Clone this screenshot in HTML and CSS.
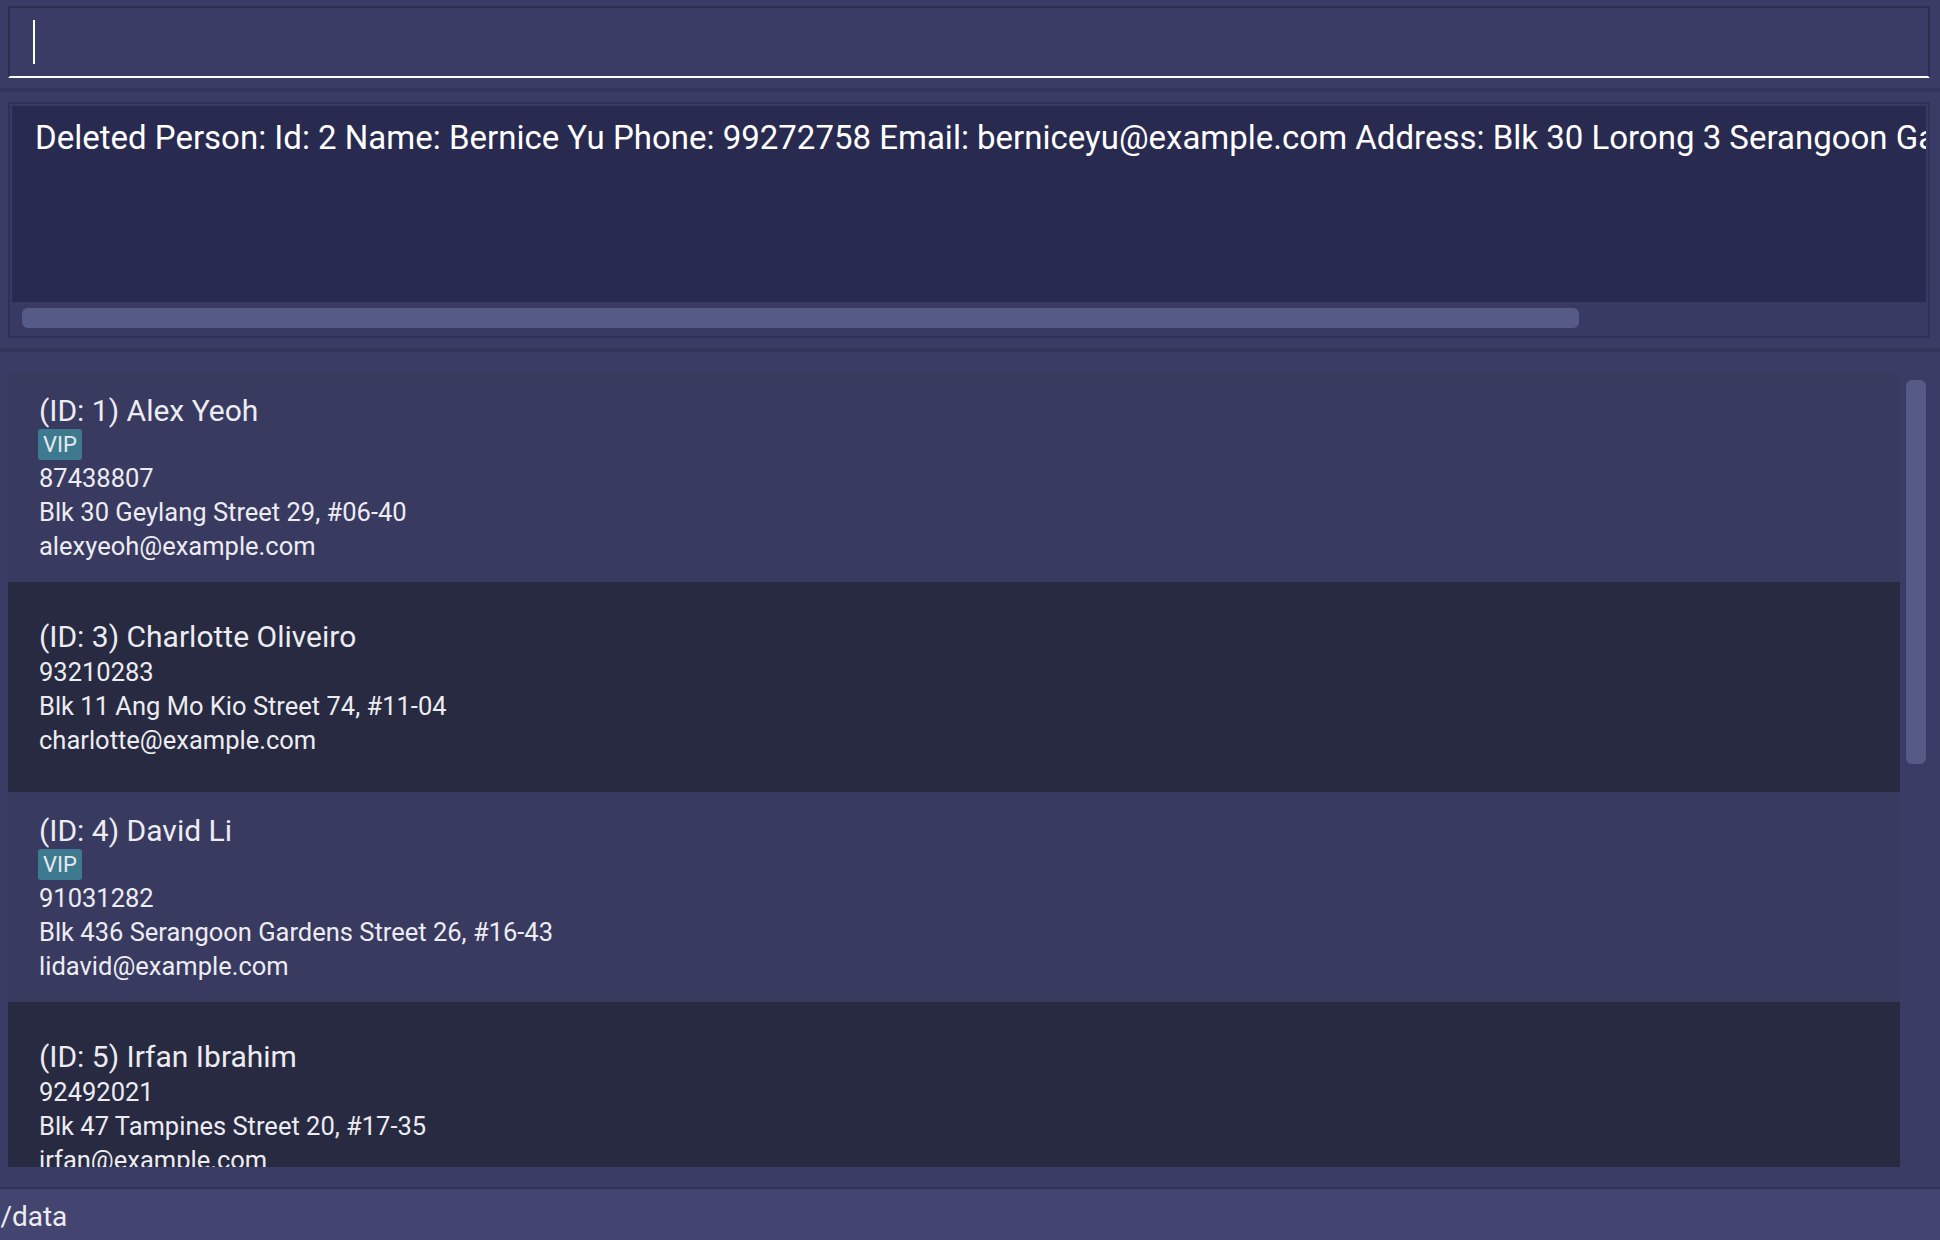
FILE: index.html
```html
<!DOCTYPE html>
<html lang="en">
<head>
<meta charset="utf-8">
<title>Address Book</title>
<link rel="stylesheet" href="styles.css">
</head>
<body>
<div class="app">
  <section class="command-area">
    <div class="command-box"><span class="caret"></span></div>
  </section>
  <section class="result-area">
    <div class="result-box">
      <div class="result-text">
        <p class="result-line">Deleted Person: Id: 2 Name: Bernice Yu Phone: 99272758 Email: berniceyu@example.com Address: Blk 30 Lorong 3 Serangoon Gardens, #07-18 Tags: [VIP]</p>
      </div>
      <div class="hscroll"><div class="hthumb"></div></div>
    </div>
  </section>
  <section class="list-area">
    <div class="list">
      <div class="card card-light">
        <div class="name">(ID: 1) Alex Yeoh</div>
        <div class="tags"><span class="tag">VIP</span></div>
        <div class="detail">87438807</div>
        <div class="detail">Blk 30 Geylang Street 29, #06-40</div>
        <div class="detail">alexyeoh@example.com</div>
      </div>
      <div class="card card-dark">
        <div class="name">(ID: 3) Charlotte Oliveiro</div>
        <div class="detail">93210283</div>
        <div class="detail">Blk 11 Ang Mo Kio Street 74, #11-04</div>
        <div class="detail">charlotte@example.com</div>
      </div>
      <div class="card card-light">
        <div class="name">(ID: 4) David Li</div>
        <div class="tags"><span class="tag">VIP</span></div>
        <div class="detail">91031282</div>
        <div class="detail">Blk 436 Serangoon Gardens Street 26, #16-43</div>
        <div class="detail">lidavid@example.com</div>
      </div>
      <div class="card card-dark">
        <div class="name">(ID: 5) Irfan Ibrahim</div>
        <div class="detail">92492021</div>
        <div class="detail">Blk 47 Tampines Street 20, #17-35</div>
        <div class="detail">irfan@example.com</div>
      </div>
    </div>
    <div class="vscroll"><div class="vthumb"></div></div>
  </section>
  <footer class="status-bar"><span class="status-path">./data</span></footer>
</div>
</body>
</html>
```
FILE: styles.css
```css
* { box-sizing: border-box; }
html, body { margin: 0; padding: 0; }
body {
  background: #3b3c66;
  font-family: Roboto, "Liberation Sans", sans-serif;
  color: #ececf2;
  overflow: hidden;
}
.app {
  width: 1940px;
  height: 1240px;
  display: flex;
  flex-direction: column;
}

/* command box */
.command-area {
  height: 88px;
  padding: 6px 10px 0 8px;
}
.command-box {
  height: 72px;
  border: 2px solid #2c2d50;
  border-bottom-color: #ffffff;
  background: #3b3c66;
  display: flex;
  align-items: center;
  padding-left: 23px;
}
.caret {
  display: block;
  width: 2px;
  height: 44px;
  background: #ffffff;
}

/* result box */
.result-area {
  border-top: 4px solid #33345b;
  border-bottom: 4px solid #33345b;
  padding: 10px 10px 10px 8px;
  height: 264px;
}
.result-box {
  height: 236px;
  border: 2px solid #30315a;
  background: #393a64;
  padding: 2px 2px 0 2px;
  display: flex;
  flex-direction: column;
}
.result-text {
  height: 196px;
  background: #282a50;
  overflow: hidden;
  padding: 10px 0 0 23px;
}
.result-line {
  margin: 0;
  white-space: nowrap;
  font-size: 33px;
  line-height: 44px;
  color: #ffffff;
}
.hscroll {
  flex: 1;
  padding: 6px 0 0 10px;
}
.hthumb {
  width: 1557px;
  height: 20px;
  border-radius: 6px;
  background: #555a87;
}

/* list */
.list-area {
  flex: 1;
  display: flex;
  padding: 20px 0 20px 8px;
  min-height: 0;
}
.list {
  width: 1892px;
  overflow: hidden;
  display: flex;
  flex-direction: column;
}
.card {
  flex: 0 0 210px;
  height: 210px;
  display: flex;
  flex-direction: column;
  justify-content: center;
  padding-left: 31px;
}
.card-light { background: #393a60; }
.card-dark { background: #272a40; }
.name {
  font-size: 30px;
  line-height: 37px;
  color: #ececf2;
}
.tags {
  height: 32px;
  display: flex;
  align-items: flex-start;
}
.tag {
  display: inline-block;
  height: 31px;
  line-height: 31px;
  padding: 0 5px;
  margin-left: -1px;
  border-radius: 3px;
  background: #3d7a8f;
  color: #e6e8f0;
  font-size: 22px;
}
.detail {
  font-size: 25.5px;
  line-height: 34px;
  color: #ececf2;
}
.vscroll {
  width: 20px;
  margin-left: 6px;
  padding-top: 8px;
}
.vthumb {
  width: 20px;
  height: 384px;
  border-radius: 6px;
  background: #555a87;
}

/* status bar */
.status-bar {
  height: 53px;
  border-top: 2px solid #30315a;
  background: #43446f;
  display: flex;
  align-items: center;
  padding-top: 4px;
}
.status-path {
  margin-left: -7px;
  font-size: 28px;
  color: #ececf2;
}
```
